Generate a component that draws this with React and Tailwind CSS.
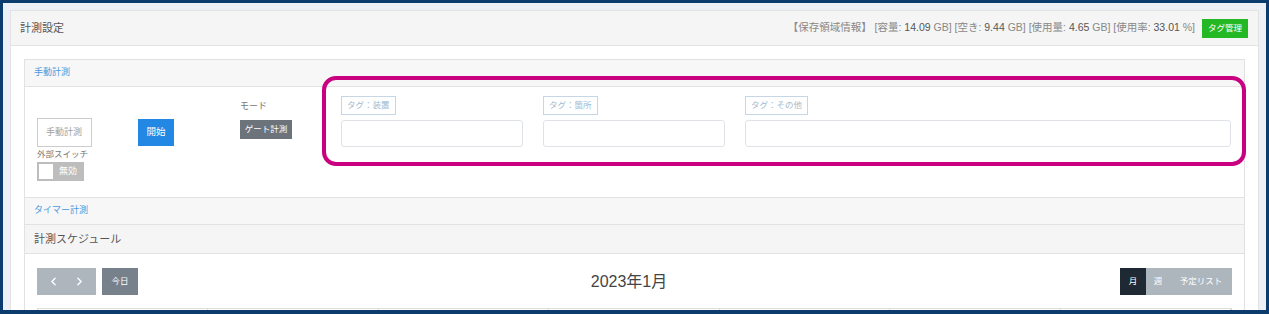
import { ChevronLeft, ChevronRight } from 'lucide-react';

const font = { fontFamily: '"Liberation Sans", "Noto Sans CJK JP", sans-serif' };

const TagField = ({ label, className }) => (
  <div className={`flex flex-col gap-[5px] ${className}`}>
    <span className="self-start border border-[#c6d6e5] px-[5px] h-[19px] leading-[17px] text-[8.5px] text-[#a3bbd0]">
      {label}
    </span>
    <div className="h-[27px] rounded-[3px] border border-[#dfe3e8] bg-white" />
  </div>
);

const App = () => {
  return (
    <div
      className="relative h-[314px] w-[1269px] overflow-hidden border-x-[3px] border-t-[3px] border-b-[4px] border-[#0b3c6d] bg-[#eef0f7] pl-[7px] pr-[7px] pt-[7px]"
      style={font}
    >
      <div className="h-[400px] border border-[#e2e2e2] bg-white">
        {/* card header */}
        <div className="flex h-[35px] items-center justify-between border-b border-[#e2e2e2] bg-[#f5f5f5] pl-[9px] pr-[10px]">
          <span className="text-[11px] text-[#555]">計測設定</span>
          <div className="flex items-center gap-[7px]">
            <span className="text-[10.5px] text-[#888]">
              【保存領域情報】 [容量: <span className="text-[#555]">14.09</span> GB] [空き: <span className="text-[#555]">9.44</span> GB] [使用量: <span className="text-[#555]">4.65</span> GB] [使用率: <span className="text-[#555]">33.01</span> %]
            </span>
            <span className="flex h-[19px] items-center bg-[#24b824] px-[6px] text-[8.5px] text-white">タグ管理</span>
          </div>
        </div>

        {/* body */}
        <div className="px-[13px] pt-[13px] pr-[13px]">
          <div className="border border-[#e2e2e2]">
            <div className="flex h-[27px] items-center border-b border-[#e2e2e2] bg-[#f7f7f7] pl-[9px] text-[9px] text-[#4a98dc]">
              手動計測
            </div>
            <div className="flex h-[110px] pl-[12px]">
              <div className="flex w-[101px] flex-col pt-[31px]">
                <div className="flex h-[29px] w-[55px] items-center border border-[#ccc] pl-[8px] text-[9px] text-[#a0a0a0]">
                  手動計測
                </div>
                <span className="mt-[2px] text-[8.5px] leading-[10px] text-[#777]">外部スイッチ</span>
                <div className="mt-[3px] flex h-[19px] w-[47px] items-center gap-[6px] bg-[#bdbdbd] pl-[2px]">
                  <span className="h-[15px] w-[14px] bg-white" />
                  <span className="text-[9px] text-white">無効</span>
                </div>
              </div>
              <div className="w-[102px] pt-[32px]">
                <div className="flex h-[27px] w-[36px] items-center justify-center bg-[#2288e4] text-[9.5px] text-white">
                  開始
                </div>
              </div>
              <div className="flex w-[101px] flex-col pt-[13px]">
                <span className="text-[9px] leading-[12px] text-[#777]">モード</span>
                <span className="mt-[8px] flex h-[19px] w-[52px] items-center justify-center bg-[#6c737b] text-[8.5px] text-white">
                  ゲート計測
                </span>
              </div>
              <div className="flex flex-1 gap-[20px] pr-[13px] pt-[9px]">
                <TagField label="タグ：装置" className="w-[182px]" />
                <TagField label="タグ：箇所" className="w-[182px]" />
                <TagField label="タグ：その他" className="flex-1" />
              </div>
            </div>
            <div className="flex h-[28px] items-center border-y border-[#e2e2e2] bg-[#f7f7f7] pl-[9px] text-[9px] text-[#4a98dc]">
              タイマー計測
            </div>
            <div className="flex h-[29px] items-center border-b border-[#e2e2e2] bg-[#f5f5f5] pl-[9px] text-[11px] text-[#555]">
              計測スケジュール
            </div>
            <div className="px-[12px] pt-[14px]">
              <div className="flex items-center justify-between">
                <div className="flex gap-[6px]">
                  <div className="flex h-[27px] w-[59px] items-center justify-around bg-[#adb5bd] px-[4px] text-white">
                    <ChevronLeft size={13} strokeWidth={2.5} />
                    <ChevronRight size={13} strokeWidth={2.5} />
                  </div>
                  <div className="flex h-[27px] w-[36px] items-center justify-center bg-[#77818c] text-[8.5px] text-white">
                    今日
                  </div>
                </div>
                <span className="text-[16px] text-[#444]">2023年1月</span>
                <div className="flex h-[27px] text-[8.5px] text-white">
                  <span className="flex w-[26px] items-center justify-center bg-[#1f2933]">月</span>
                  <span className="flex w-[24px] items-center justify-center bg-[#adb5bd]">週</span>
                  <span className="flex w-[62px] items-center justify-center bg-[#adb5bd]">予定リスト</span>
                </div>
              </div>
              <div className="mt-[13px] grid grid-cols-7 border border-[#ddd]">
                {Array.from({ length: 7 }).map((_, i) => (
                  <div key={i} className="h-[20px] border-r border-[#ddd]" />
                ))}
              </div>
            </div>
          </div>
        </div>
      </div>

      {/* annotation overlay */}
      <div className="absolute left-[319px] top-[73px] h-[90px] w-[924px] rounded-[14px] border-[4px] border-[#c9007f]" />
    </div>
  );
};

export default App;
